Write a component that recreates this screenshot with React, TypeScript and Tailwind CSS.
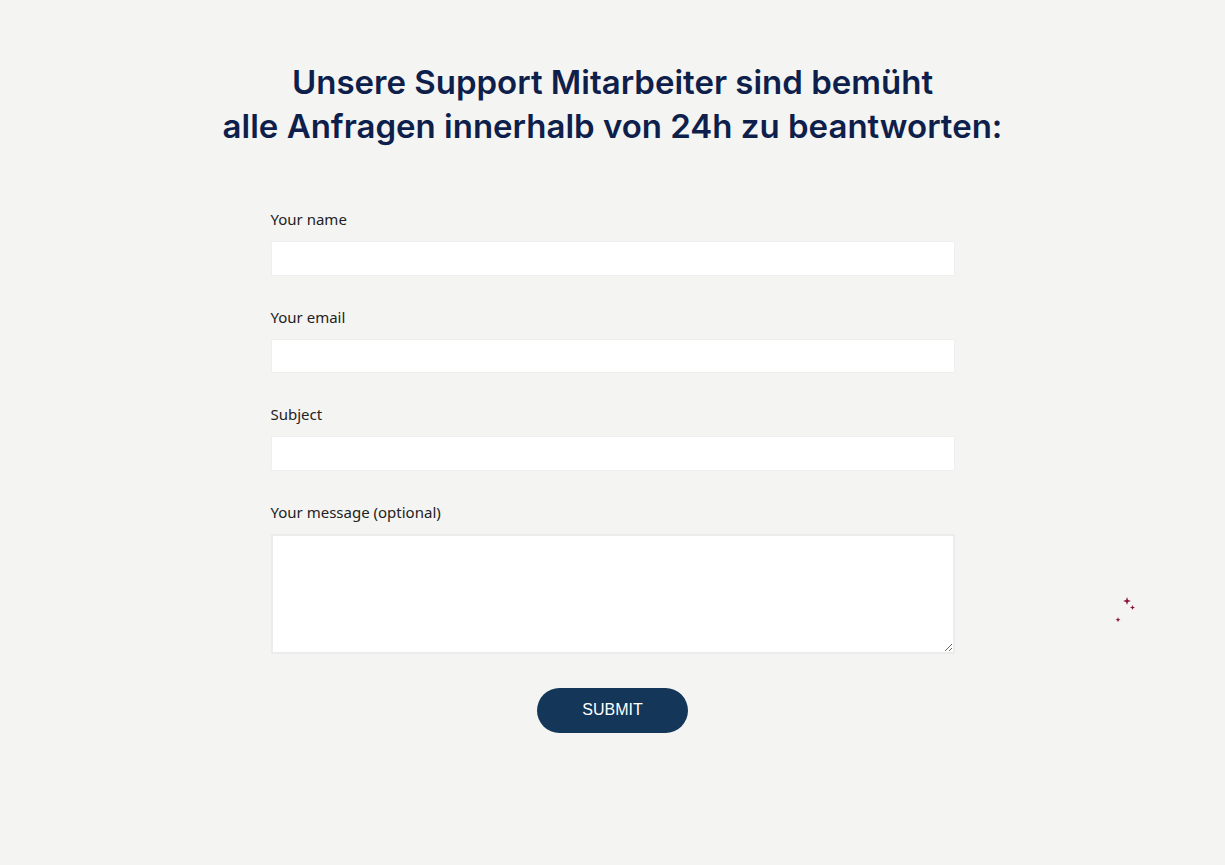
import React from 'react';

const fields = [
  { id: 'name', label: 'Your name' },
  { id: 'email', label: 'Your email' },
  { id: 'subject', label: 'Subject' },
];

function Sparkles() {
  return (
    <svg className="absolute left-[1114px] top-[595px]" width="24" height="30" viewBox="0 0 24 30">
      <path d="M13 2 L14 5 L17 6 L14 7 L13 10 L12 7 L9 6 L12 5 Z" fill="#8a1538" />
      <path d="M18.5 10 L19.2 11.8 L21 12.5 L19.2 13.2 L18.5 15 L17.8 13.2 L16 12.5 L17.8 11.8 Z" fill="#8a1538" />
      <path d="M4 22 L4.7 24 L6.5 24.7 L4.7 25.4 L4 27.2 L3.3 25.4 L1.5 24.7 L3.3 24 Z" fill="#8a1538" />
    </svg>
  );
}

export default function App() {
  return (
    <div className="relative min-h-[865px] w-full bg-[#f4f4f3] pt-[60px]">
      <h1 className="text-center font-['Inter',sans-serif] text-[33px] font-semibold leading-[44px] text-[#0f1f4b]">
        Unsere Support Mitarbeiter sind bemüht
        <br />
        alle Anfragen innerhalb von 24h zu beantworten:
      </h1>

      <form className="mx-auto mt-[60px] w-[684px] font-['Noto_Sans',sans-serif] text-[15px] text-[#222]">
        {fields.map((f) => (
          <div key={f.id} className="mb-[30px]">
            <label htmlFor={f.id} className="block h-[22px] leading-[22px]">
              {f.label}
            </label>
            <input
              id={f.id}
              type="text"
              className="mt-[11px] block h-[34.6px] w-full border border-[#efefef] bg-white px-2 outline-none"
            />
          </div>
        ))}
        <div>
          <label htmlFor="message" className="block h-[22px] leading-[22px]">
            Your message (optional)
          </label>
          <textarea
            id="message"
            className="mt-[11px] block h-[120px] w-full border-2 border-[#ececec] bg-white p-2 outline-none"
          />
        </div>
        <div className="mt-[34px] flex justify-center">
          <button
            type="button"
            className="h-[45px] w-[151px] rounded-full bg-[#133659] font-['Liberation_Sans',sans-serif] text-[16px] text-white"
          >
            SUBMIT
          </button>
        </div>
      </form>

      <Sparkles />
    </div>
  );
}
